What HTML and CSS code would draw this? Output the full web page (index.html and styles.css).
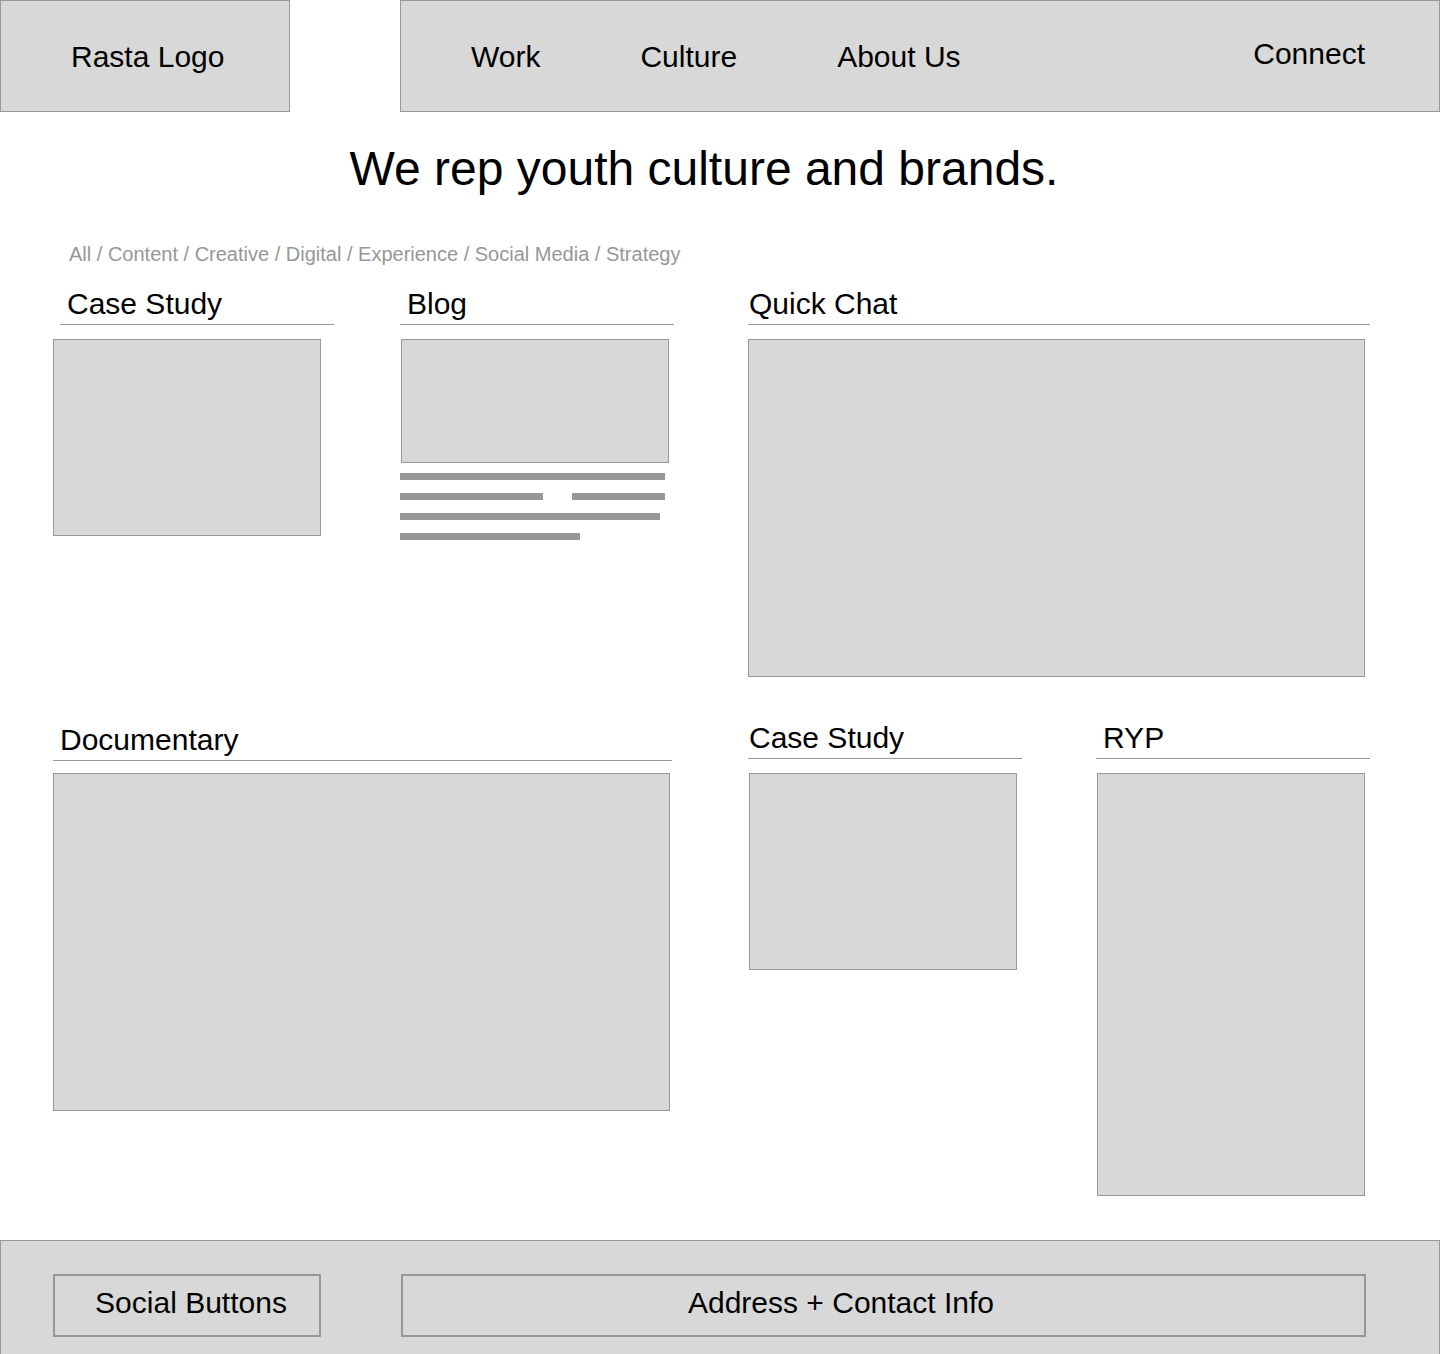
FILE: index.html
```html
<!DOCTYPE html>
<html lang="en">
<head>
  <meta charset="utf-8">
  <meta name="viewport" content="width=device-width, initial-scale=1">
  <title>Rasta</title>
  <link rel="stylesheet" href="styles.css">
</head>
<body>
  <header class="header">
    <a class="logo" href="#">Rasta Logo</a>
    <nav class="nav">
      <a class="nav-link" href="#work">Work</a>
      <a class="nav-link" href="#culture">Culture</a>
      <a class="nav-link" href="#about">About Us</a>
      <a class="nav-link nav-connect" href="#contact">Connect</a>
    </nav>
  </header>

  <main>
    <h1 class="headline">We rep youth culture and brands.</h1>

    <nav class="filters">
      <a href="#all">All</a> / <a href="#content">Content</a> / <a href="#creative">Creative</a> / <a href="#digital">Digital</a> / <a href="#experience">Experience</a> / <a href="#social">Social Media</a> / <a href="#strategy">Strategy</a>
    </nav>

    <div class="cards">
      <article class="card card-lead">
        <h2 class="card-title card-title-inset">Case Study</h2>
        <div class="thumb"></div>
      </article>
      <article class="card">
        <h2 class="card-title card-title-inset">Blog</h2>
        <div class="thumb thumb-short"></div>
        <div class="excerpt">
          <div class="line"></div>
          <div class="line-pair">
            <div class="line line-half"></div>
            <div class="line line-third"></div>
          </div>
          <div class="line line-long"></div>
          <div class="line line-end"></div>
        </div>
      </article>
      <article class="card card-wide card-chat">
        <h2 class="card-title">Quick Chat</h2>
        <div class="thumb thumb-wide"></div>
      </article>
      <article class="card card-wide card-documentary">
        <h2 class="card-title card-title-inset">Documentary</h2>
        <div class="thumb thumb-wide"></div>
      </article>
      <article class="card">
        <h2 class="card-title">Case Study</h2>
        <div class="thumb"></div>
      </article>
      <article class="card">
        <h2 class="card-title card-title-inset">RYP</h2>
        <div class="thumb thumb-tall"></div>
      </article>
    </div>
  </main>

  <footer class="footer" id="contact">
    <div class="footer-box footer-social">Social Buttons</div>
    <div class="footer-box footer-address">Address + Contact Info</div>
  </footer>
</body>
</html>
```
FILE: styles.css
```css
:root {
  --fill: #d8d8d8;
  --stroke: #979797;
}

* {
  box-sizing: border-box;
}

body {
  margin: 0;
  background: #fff;
  color: #000;
  font-family: "Liberation Sans", Arial, Helvetica, sans-serif;
  font-size: 30px;
  line-height: 34px;
}

a {
  color: inherit;
  text-decoration: none;
}

/* Header */

.header {
  display: flex;
  gap: 110px;
}

.logo,
.nav {
  display: flex;
  align-items: flex-start;
  padding-top: 39px;
  padding-bottom: 37px;
  border: 1px solid var(--stroke);
  background: var(--fill);
}

.logo {
  flex: 0 0 290px;
  padding-left: 70px;
}

.nav {
  flex: 1;
  gap: 100px;
  padding-left: 70px;
  padding-right: 74px;
}

.nav-connect {
  margin-top: -3px;
  margin-left: auto;
}

/* Intro */

.headline {
  margin: 29px 0 0;
  padding-right: 32px;
  font-size: 48px;
  font-weight: 400;
  line-height: 56px;
  text-align: center;
}

.filters {
  margin: 45px 69px 0;
  color: var(--stroke);
  font-size: 20px;
  line-height: 24px;
}

/* Cards */

.cards {
  display: grid;
  grid-template-columns: repeat(4, minmax(0, 1fr));
  gap: 44px 74px;
  align-items: start;
  padding: 21px 69px 44px 53px;
}

.card-wide {
  grid-column: span 2;
}

.card-title {
  margin: 0 1px 14px -1px;
  padding-bottom: 3px;
  padding-left: 1px;
  border-bottom: 1px solid var(--stroke);
  font-size: 30px;
  font-weight: 400;
  line-height: 34px;
}

.card-title-inset {
  padding-left: 7px;
}

.card-lead .card-title {
  margin-left: 7px;
  margin-right: -7px;
}

.card-documentary .card-title {
  margin: 2px 3px 12px 0;
}

.thumb {
  aspect-ratio: 268 / 197;
  margin-right: 6px;
  border: 1px solid var(--stroke);
  background: var(--fill);
}

.thumb-short {
  aspect-ratio: 268 / 124;
}

.thumb-tall {
  aspect-ratio: 268 / 423;
}

.thumb-wide {
  aspect-ratio: 617 / 338;
  margin-right: 5px;
}

.card-chat .thumb {
  margin-left: -1px;
  margin-right: 6px;
}

.excerpt {
  display: grid;
  gap: 13px;
  margin: 10px 10px 0 -1px;
}

.line {
  height: 7px;
  background: var(--stroke);
}

.line-pair {
  display: flex;
  justify-content: space-between;
}

.line-half {
  width: 54%;
}

.line-third {
  width: 35%;
}

.line-long {
  width: 98%;
}

.line-end {
  width: 68%;
}

/* Footer */

.footer {
  display: grid;
  grid-template-columns: 268px 1fr;
  gap: 80px;
  padding: 33px 73px 17px 52px;
  border: 1px solid var(--stroke);
  border-bottom: 0;
  background: var(--fill);
}

.footer-box {
  padding-top: 10px;
  padding-bottom: 15px;
  border: 2px solid var(--stroke);
  text-align: center;
}

.footer-social {
  padding-left: 8px;
}

.footer-address {
  padding-right: 85px;
}
```
